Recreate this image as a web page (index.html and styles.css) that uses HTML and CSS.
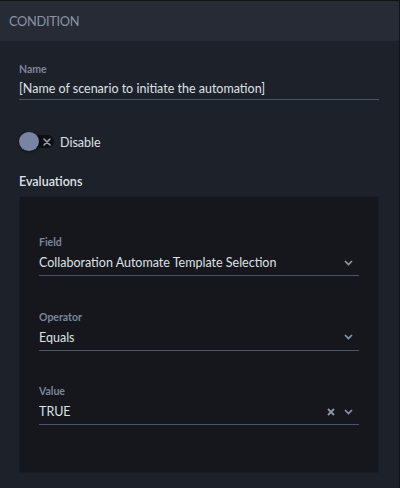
FILE: index.html
```html
<!DOCTYPE html>
<html>
<head>
<meta charset="utf-8">
<link rel="stylesheet" href="styles.css">
</head>
<body>
<div class="panel">
  <div class="header">CONDITION</div>
  <div class="content">
    <div class="field">
      <div class="label">Name</div>
      <div class="value-row name-row"><span class="value">[Name of scenario to initiate the automation]</span></div>
    </div>
    <div class="toggle-row">
      <div class="toggle">
        <div class="track">
          <svg class="track-x" width="8" height="8" viewBox="0 0 8 8"><path d="M1 1L7 7M7 1L1 7" stroke="#9aa3b5" stroke-width="1.6" stroke-linecap="round"/></svg>
        </div>
        <div class="knob"></div>
      </div>
      <span class="toggle-label">Disable</span>
    </div>
    <div class="section-title">Evaluations</div>
    <div class="box">
      <div class="field">
        <div class="label">Field</div>
        <div class="value-row"><span class="value">Collaboration Automate Template Selection</span>
          <svg class="chev" width="9" height="6" viewBox="0 0 9 6"><path d="M1 1L4.5 4.5L8 1" stroke="#8d97ab" stroke-width="1.7" fill="none"/></svg>
        </div>
      </div>
      <div class="field">
        <div class="label">Operator</div>
        <div class="value-row"><span class="value">Equals</span>
          <svg class="chev" width="9" height="6" viewBox="0 0 9 6"><path d="M1 1L4.5 4.5L8 1" stroke="#8d97ab" stroke-width="1.7" fill="none"/></svg>
        </div>
      </div>
      <div class="field">
        <div class="label">Value</div>
        <div class="value-row"><span class="value">TRUE</span>
          <svg class="clear" width="8" height="8" viewBox="0 0 8 8"><path d="M1 1L7 7M7 1L1 7" stroke="#8d97ab" stroke-width="1.8"/></svg>
          <svg class="chev" width="9" height="6" viewBox="0 0 9 6"><path d="M1 1L4.5 4.5L8 1" stroke="#8d97ab" stroke-width="1.7" fill="none"/></svg>
        </div>
      </div>
    </div>
  </div>
</div>
</body>
</html>
```
FILE: styles.css
```css
html, body {
  margin: 0;
  padding: 0;
  background: #1d212a;
}
body {
  width: 400px;
  height: 488px;
  overflow: hidden;
  font-family: Lato, "Liberation Sans", sans-serif;
}
.panel {
  width: 399px;
  height: 487px;
  border-top: 1px solid #121418;
  border-right: 1px solid #121418;
  background: #1d212a;
}
.header {
  height: 40px;
  background: #262b36;
  color: #8b94a6;
  font-size: 12.8px;
  line-height: 40px;
  padding-left: 9px;
  letter-spacing: -0.3px;
}
.content {
  padding: 21px 20px 0 19px;
}
.field {
  display: flex;
  flex-direction: column;
}
.label {
  color: #7c869b;
  font-size: 10.5px;
  font-weight: 700;
  line-height: 15px;
}
.value-row {
  display: flex;
  align-items: center;
  height: 25px;
  border-bottom: 1px solid #4b5368;
  gap: 9px;
}
.name-row {
  height: 22px;
}
.value {
  color: #dfe1e6;
  font-size: 12.5px;
  flex: 1;
  white-space: nowrap;
}
.chev {
  margin-right: 6px;
}
.toggle-row {
  display: flex;
  align-items: center;
  margin-top: 32px;
  height: 20px;
}
.toggle {
  position: relative;
  width: 35px;
  height: 20px;
}
.track {
  position: absolute;
  left: 14px;
  top: 3px;
  width: 21px;
  height: 13px;
  border-radius: 7px;
  background: #0d0f12;
  display: flex;
  align-items: center;
  justify-content: center;
}
.track-x {
  margin-left: 6px;
}
.knob {
  position: absolute;
  left: 0;
  top: 0;
  width: 20px;
  height: 19px;
  border-radius: 50%;
  background: #7884a2;
  box-shadow: 0 1px 3px rgba(0,0,0,0.5);
}
.toggle-label {
  margin-left: 6px;
  color: #dfe1e6;
  font-size: 12.5px;
}
.section-title {
  margin-top: 21px;
  color: #dfe1e6;
  font-size: 12.5px;
  font-weight: 600;
  line-height: 18px;
}
.box {
  margin-top: 5px;
  background: #15171c;
  border: 1px solid #1a1d23;
  height: 277px;
  box-sizing: border-box;
  padding: 38px 19px 0 19px;
  display: flex;
  flex-direction: column;
  gap: 33.5px;
}
```
